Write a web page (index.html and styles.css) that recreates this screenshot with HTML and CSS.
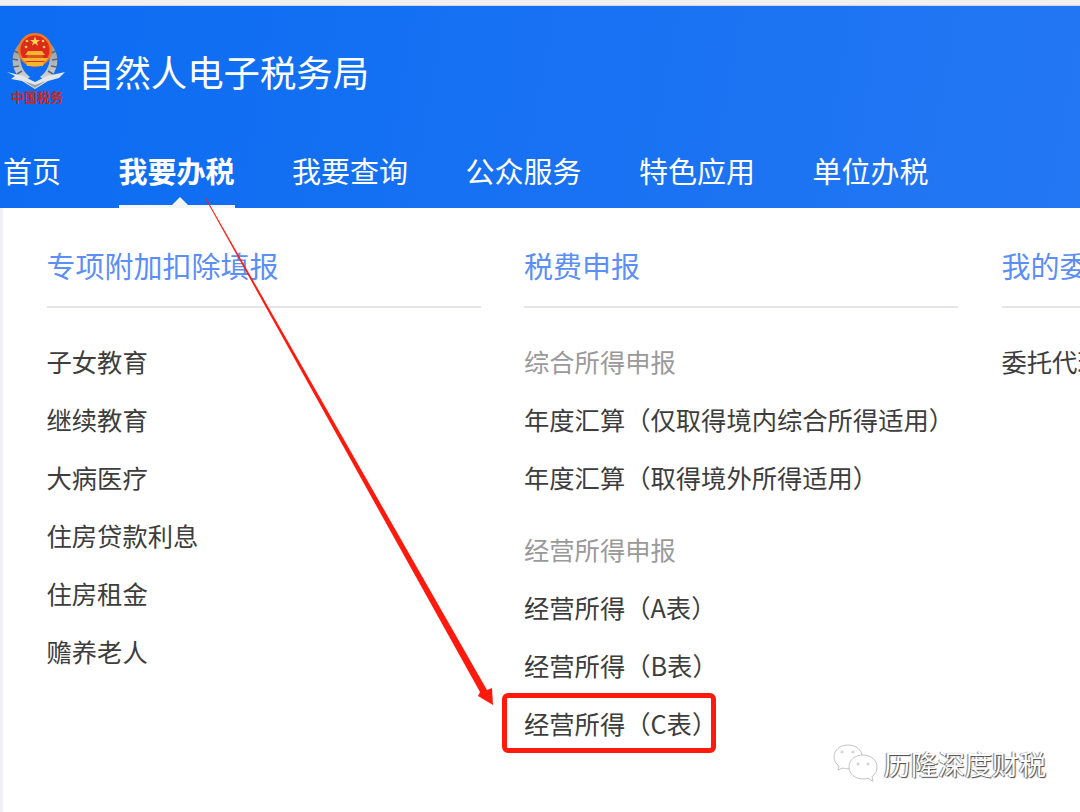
FILE: index.html
```html
<!DOCTYPE html>
<html lang="zh-CN">
<head>
  <meta charset="UTF-8">
  <title>自然人电子税务局</title>
  <link rel="stylesheet" href="styles.css">
</head>
<body>
  <div class="top-strip"></div>

  <!-- Header -->
  <div class="header">
    <div class="brand">
      <svg class="emblem" width="60" height="76" viewBox="0 0 60 76">
        <defs>
          <linearGradient id="silver" x1="0" y1="0" x2="0" y2="1">
            <stop offset="0" stop-color="#8d949b"/>
            <stop offset="1" stop-color="#d3d7db"/>
          </linearGradient>
        </defs>
        <!-- wreath -->
        <path d="M13 13C3 24 5 42 18 50L24 46C14 39 12 26 17 17Z" fill="url(#silver)"/>
        <path d="M45 13C55 24 53 42 40 50L34 46C44 39 46 26 41 17Z" fill="url(#silver)"/>
        <path d="M8 20l5 2M6 28l6 1M7 36l6-1M11 43l5-3M50 20l-5 2M52 28l-6 1M51 36l-6-1M47 43l-5-3" stroke="#5d6670" stroke-width="1.500" fill="none"/>
        <!-- ribbon -->
        <path d="M1 41L17 45L29 51L41 45L59 41L53 47L42 50L29 58L16 50L5 48L9 45Z" fill="#e4e7ea"/>
        <path d="M18 50L29 57L40 50L29 54Z" fill="#9aa0a6"/>
        <!-- shield -->
        <circle cx="29" cy="19" r="17" fill="#f07a24"/>
        <circle cx="29" cy="19" r="14.500" fill="#dc2a1c"/>
        <path d="M29 5.500l1.300 3.500h3.700l-3 2.200 1.100 3.600-3.100-2.200-3.100 2.200 1.100-3.600-3-2.200h3.700z" fill="#ffd34d"/>
        <circle cx="21" cy="10" r="1.300" fill="#ffd34d"/>
        <circle cx="37" cy="10" r="1.300" fill="#ffd34d"/>
        <circle cx="20" cy="16" r="1.300" fill="#ffd34d"/>
        <circle cx="38" cy="16" r="1.300" fill="#ffd34d"/>
        <path d="M22 20h14l3 4H19z" fill="#f6b52e"/>
        <path d="M21 24h16v3H21z" fill="#d9571c"/>
        <path d="M16 27h26l-2 3H18zM20 31h18l-1 4H21z" fill="#f6b52e"/>
        <text class="emblem-text" x="31" y="71" text-anchor="middle">中国税务</text>
      </svg>
      <div class="site-name">自然人电子税务局</div>
    </div>
    <div class="nav">
      <div class="nav-item">首页</div>
      <div class="nav-item active">我要办税</div>
      <div class="nav-item">我要查询</div>
      <div class="nav-item">公众服务</div>
      <div class="nav-item">特色应用</div>
      <div class="nav-item">单位办税</div>
    </div>
  </div>

  <!-- Menu -->
  <div class="menu">
    <div class="menu-col">
      <div class="col-title">专项附加扣除填报</div>
      <div class="col-list">
        <div class="row">子女教育</div>
        <div class="row">继续教育</div>
        <div class="row">大病医疗</div>
        <div class="row">住房贷款利息</div>
        <div class="row">住房租金</div>
        <div class="row">赡养老人</div>
      </div>
    </div>
    <div class="menu-col">
      <div class="col-title">税费申报</div>
      <div class="col-list">
        <div class="row group">综合所得申报</div>
        <div class="row">年度汇算（仅取得境内综合所得适用）</div>
        <div class="row">年度汇算（取得境外所得适用）</div>
        <div class="row group spaced">经营所得申报</div>
        <div class="row">经营所得（A表）</div>
        <div class="row">经营所得（B表）</div>
        <div class="row">经营所得（C表）</div>
      </div>
    </div>
    <div class="menu-col">
      <div class="col-title">我的委托</div>
      <div class="col-list">
        <div class="row">委托代理</div>
      </div>
    </div>
  </div>

  <!-- Annotation on top of the screenshot -->
  <svg class="arrow" width="1080" height="812" viewBox="0 0 1080 812">
    <polygon points="205,198 206,198 487,690 492,688 493,705 478,696 480,692" fill="#ff1a0d"/>
  </svg>
  <div class="red-box"></div>

  <div class="watermark">
    <svg width="50" height="40" viewBox="0 0 50 40" fill="#fff" stroke="#c4c4c4" stroke-width="1">
      <path d="M15 1C7 1 1 6 1 13c0 4 2 7 5 9l-1 4 5-2c2 .6 3 .8 5 .8 8 0 14-5 14-12S23 1 15 1Z"/>
      <path d="M30 11c-8 0-14 5-14 12s6 12 14 12c2 0 3-.2 5-.8l5 3-1-4.500c3-2 5-5.500 5-9.700C44 16 38 11 30 11Z"/>
      <circle cx="9" cy="8" r="1"/><circle cx="20" cy="8" r="1"/>
      <circle cx="25" cy="20" r="1"/><circle cx="35" cy="20" r="1"/>
    </svg>
    <span class="watermark-text">历隆深度财税</span>
  </div>
</body>
</html>
```

FILE: styles.css
```css
* {
  margin: 0;
  padding: 0;
  box-sizing: border-box;
  font-family: "Noto Sans CJK SC", "Noto Sans", sans-serif;
}

body {
  width: 1080px;
  height: 812px;
  overflow: hidden;
  background-color: #ffffff;
  display: flex;
  flex-direction: column;
  position: relative;
}

.top-strip {
  height: 6px;
  background-color: #f0f0f0;
  border-bottom: 1px solid #d3d9e4;
}

.header {
  height: 202px;
  background: linear-gradient(100deg, #0c6cf2, #2377f3);
  color: #ffffff;
  display: flex;
  flex-direction: column;
}

.brand {
  display: flex;
  align-items: center;
  gap: 12px;
  padding: 25px 0 0 6px;
}

.emblem-text {
  font-size: 13px;
  fill: #c8261c;
  font-weight: 700;
}

.site-name {
  font-size: 36.400px;
  line-height: 50px;
  margin-top: 4px;
}

.nav {
  display: flex;
  gap: 57.500px;
  padding-left: 3px;
  margin-top: auto;
}

.nav-item {
  font-size: 29px;
  line-height: 40px;
  height: 58px;
  position: relative;
}

.nav-item.active {
  font-weight: 700;
  border-bottom: 3px solid #f5f6f8;
}

.nav-item.active::after {
  content: "";
  position: absolute;
  left: 50%;
  bottom: 0;
  margin-left: -5px;
  border-left: 8px solid transparent;
  border-right: 8px solid transparent;
  border-bottom: 8px solid #f5f6f8;
}

.menu {
  flex-grow: 1;
  display: flex;
  gap: 43.500px;
  padding: 35px 0 0 43.500px;
  border-left: 3px solid #eff1f4;
  overflow: hidden;
}

.menu-col {
  width: 434px;
  flex-shrink: 0;
}

.col-title {
  font-size: 29px;
  line-height: 44px;
  color: #5b8ef6;
  padding-bottom: 19px;
  border-bottom: 2px solid #e4e4ea;
}

.col-list {
  padding-top: 24px;
}

.row {
  font-size: 25.300px;
  line-height: 58px;
  color: #3d3d3d;
  white-space: nowrap;
}

.row.group {
  color: #9a9a9a;
}

.row.spaced {
  margin-top: 14px;
}

.arrow {
  position: absolute;
  left: 0;
  top: 0;
}

.red-box {
  position: absolute;
  left: 502px;
  top: 693px;
  width: 214px;
  height: 60px;
  border: 5px solid #ff1a0d;
  border-radius: 6px;
}

.watermark {
  position: absolute;
  left: 833px;
  top: 744px;
  display: flex;
  align-items: center;
  gap: 1px;
}

.watermark-text {
  font-size: 27px;
  line-height: 40px;
  color: #ffffff;
  text-shadow: 1px 1px 1px #444444, -1px 0 1px #777777;
}
```
